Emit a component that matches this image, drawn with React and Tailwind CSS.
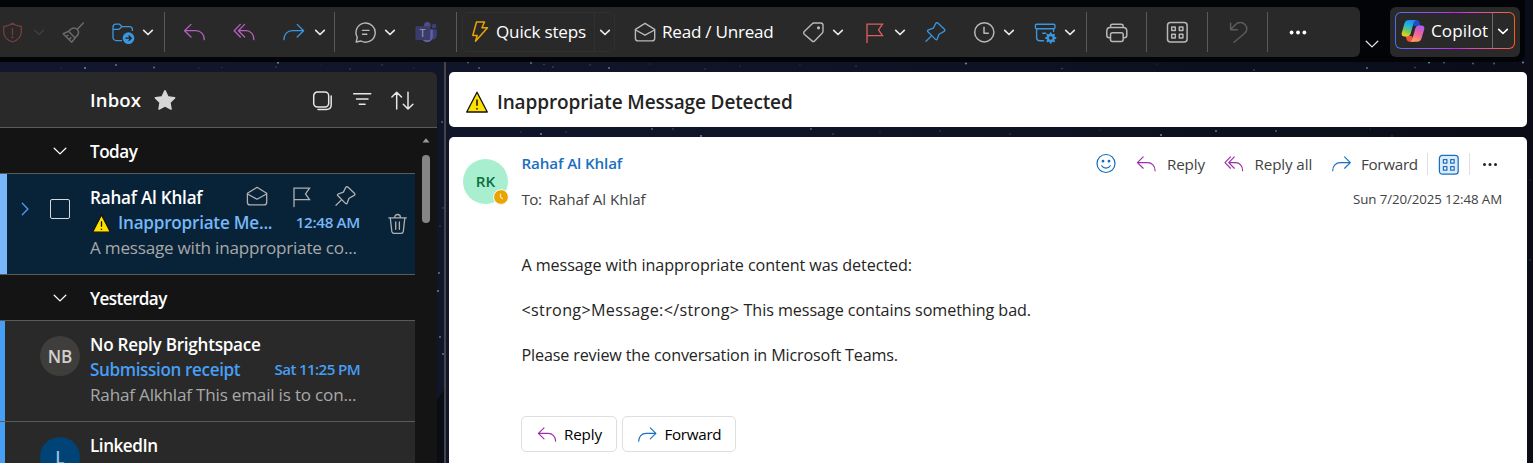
import React from 'react';

const Icon = ({ className = '', children, sw = 1.3, label }) => (
  <svg
    viewBox="0 0 24 24"
    aria-label={label}
    className={`shrink-0 ${className.includes('h-') ? '' : 'h-6 w-6'} ${className}`}
    fill="none"
    stroke="currentColor"
    strokeWidth={sw}
    strokeLinecap="round"
    strokeLinejoin="round"
  >
    {children}
  </svg>
);

const Chevron = ({ className = '' }) => (
  <svg viewBox="0 0 12 12" className={`h-3 w-3 shrink-0 ${className}`} fill="none" stroke="currentColor" strokeWidth="1.7" strokeLinecap="round" strokeLinejoin="round">
    <path d="M1.7 4.3 6 8.5l4.3-4.2" />
  </svg>
);

const ThinChevron = ({ className = '' }) => (
  <svg viewBox="0 0 14 14" className={`h-3.5 w-3.5 shrink-0 ${className}`} fill="none" stroke="currentColor" strokeWidth="1.3" strokeLinecap="round" strokeLinejoin="round">
    <path d="M1.2 4.3 7 9.9l5.8-5.6" />
  </svg>
);

const ReplyIcon = (p) => (
  <Icon {...p}>
    <path d="M8 4.4 1.6 10.7 8 17M2 10.7h10.8c5 0 8.5 3.6 8.5 9" />
  </Icon>
);
const ReplyAllIcon = (p) => (
  <Icon {...p}>
    <path d="M8.3 4.4 2.2 10.7 8.3 17M12.6 4.4l-6.2 6.3 6.2 6.3M7 10.7h7c4.6 0 7.9 3.6 7.9 9" />
  </Icon>
);
const ForwardIcon = (p) => (
  <Icon {...p}>
    <path d="M15.2 4.4 21.6 10.7 15.2 17M21.2 10.7H10.4c-5 0-8.5 3.6-8.5 9" />
  </Icon>
);
const MailIcon = (p) => (
  <Icon {...p}>
    <path d="M2.4 9.3 12 3.3l9.7 6v8.9a2.7 2.7 0 0 1-2.7 2.7H5.1a2.7 2.7 0 0 1-2.7-2.7zM2.6 10 12 15.2 21.5 10" />
  </Icon>
);
const FlagIcon = (p) => (
  <Icon {...p}>
    <path d="M5 22.5V4.2h15.5l-4 5.7 4 5.7H5" strokeLinejoin="miter" />
  </Icon>
);
const PinIcon = (p) => (
  <Icon {...p}>
    <path d="M12.8 3.3q1.100-1 2.300 0l6.300 6q1.100 1.200-.2 2.100L16 14.200l-2 5.200q-.5.900-1.300.2L4.700 11.500q-.7-.8.2-1.300l5.500-2.100zM8.700 15.600 3 21.200" />
  </Icon>
);
const GridIcon = ({ tint = false, ...p }) => (
  <Icon {...p}>
    <rect x="2.500" y="2.500" width="19.600" height="19.600" rx="3" fill={tint ? '#dcebf8' : 'none'} />
    <path d="M6.700 6.900h3.600v3.600H6.700zM14.300 6.900h3.600v3.600h-3.600zM6.700 14.300h3.600v3.600H6.700zM14.300 14.300h3.600v3.600h-3.600z" fill={tint ? '#fff' : 'none'} />
  </Icon>
);
const Dots = ({ className = '', r = 1.9, gap = 6.4 }) => (
  <svg viewBox="0 0 24 24" className={`h-6 w-6 shrink-0 ${className}`} fill="currentColor">
    <circle cx={12 - gap} cy="12.500" r={r} />
    <circle cx="12" cy="12.500" r={r} />
    <circle cx={12 + gap} cy="12.500" r={r} />
  </svg>
);
const Warning = ({ className = '' }) => (
  <svg viewBox="0 0 22 22" className={`shrink-0 ${className}`}>
    <path d="M11 1.200 21.300 21H.7z" fill="#ffe100" stroke="#111" strokeWidth="1.300" strokeLinejoin="round" />
    <path d="M11 8.500v6.300M11 17v1.600" stroke="#111" strokeWidth="1.500" />
  </svg>
);

const Divider = ({ className = '' }) => <div className={`h-10 w-px shrink-0 bg-[#5a5a5a] ${className}`} />;

const CopilotLogo = () => (
  <svg viewBox="0 0 24 24" className="h-6 w-6 shrink-0">
    <defs>
      <linearGradient id="cpA" x1="0.600" y1="0" x2="0.300" y2="1">
        <stop offset="0" stopColor="#1f8cf0" />
        <stop offset="0.350" stopColor="#25b5dc" />
        <stop offset="0.650" stopColor="#6cc665" />
        <stop offset="1" stopColor="#f2d30c" />
      </linearGradient>
      <linearGradient id="cpB" x1="0.700" y1="0" x2="0.300" y2="1">
        <stop offset="0" stopColor="#b35cf0" />
        <stop offset="0.500" stopColor="#f0629a" />
        <stop offset="1" stopColor="#ffa55c" />
      </linearGradient>
    </defs>
    <path d="M11 1h4.500q2.200 0 2.900 2.300L19.300 7H13z" fill="#1b50c4" />
    <path d="M13 22.800H8.500q-2.200 0-2.900-2.300L4.700 17H11z" fill="#f0503c" />
    <path d="M7.800 1h7.500q-2 .5-2.700 3L9.700 14.500Q8.800 17.500 5.800 17.500H3Q-.2 17.300.9 13.300L3.600 4Q4.600 1 7.800 1z" fill="url(#cpA)" />
    <path d="M16.200 22.800H8.700q2-.5 2.700-3L14.300 9.500q.9-3 3.900-3H21q3.200.2 2.100 4.200l-2.700 9.100q-1 3-4.200 3z" fill="url(#cpB)" />
  </svg>
);

const STARS = [
  [61, 67.7, 0.5], [85, 68, 1], [116, 65, 0.9], [154, 67.5, 0.9], [199, 68, 0.5], [222, 67.5, 0.5], [278, 62.7, 1], [276, 67, 0.6], [350, 69, 0.6], [382, 65, 0.6],
  [321, 65, 0.4], [414, 68, 0.5], [468, 62.5, 0.8], [479, 68, 0.8], [531, 63, 0.9], [544, 64.5, 0.6], [553, 67, 0.7], [590, 65, 0.6], [609, 68, 0.9], [650, 64, 0.5], [705, 69, 0.6],
  [740, 66, 0.5], [800, 65, 0.5], [856, 66, 0.6], [966, 63.5, 1], [1062, 68.5, 0.7], [1157, 64, 0.5], [1254, 70, 0.7], [1367, 68, 0.9], [1415, 67.5, 0.7], [1429, 62.5, 1], [1444, 62.5, 0.8],
  [1473, 63.5, 0.8], [1494, 63.5, 0.8], [1523, 62.5, 1], [442, 122, 0.8], [521, 132, 0.6], [541, 134, 1], [566, 132, 0.6], [652, 129, 0.8], [673, 129, 0.7], [701, 136, 1], [811, 129, 0.8],
  [833, 134, 0.7], [880, 132, 0.5], [940, 131, 0.6], [1010, 134, 0.6], [1100, 130, 0.5], [1161, 135, 1], [1216, 131, 0.9], [1276, 131, 0.8], [1370, 129, 0.5], [1392, 136, 0.6],
  [440, 226, 0.6], [439, 273, 0.9], [438, 291, 1], [443, 208, 0.7], [440, 337, 0.9], [443, 354, 0.9], [1530, 180, 0.5], [1530, 260, 0.6],
];

const Toolbar = () => (
  <div className="flex h-[62px] w-[1525px] shrink-0 rounded-br-lg bg-[#020408] pt-[7px]">
    <div className="flex h-[50px] w-[1360px] shrink-0 items-center rounded-r-md bg-[#292929] text-[#b8b8b8]">
      <Icon className="text-[#793c3c]" label="Report">
        <path d="M12.500 3.200C10 5.300 7 6.200 3.700 6.300V12c0 5 3.300 8 8.800 10 5.500-2 8.800-5 8.800-10V6.300c-3.300-.1-6.300-1-8.800-3.100zM12.500 8.500v6" />
        <circle cx="12.500" cy="17.300" r=".5" />
      </Icon>
      <Chevron className="ml-[9px] text-[#3c3c3c]" />
      <Icon className="ml-4 text-[#6a6a6a]" sw={1.5} label="Sweep">
        <path d="m22.300 3-6 6.200M2.200 13.700l5.200-2.300 3-2.600c2-1.300 4-1.100 5.700.5 1.600 1.700 1.800 3.800.5 5.700l-2.500 3-3.400 4.300zM7.600 11.300l6.300 6.500M5.200 16.300l1.700-1M8.500 19.300l1.300-1.600" />
      </Icon>
      <Icon className="ml-[26px] text-[#3a96dd]" label="Move">
        <path d="M10.500 20.600H5.200A3.200 3.200 0 0 1 2 17.400V7.200A3 3 0 0 1 5 4.200h3.600l2.500 2.500h7.400c1.700 0 2.900 1.200 2.900 2.900v1M2 9.300h6l3-2.600" />
        <circle cx="17.500" cy="18.200" r="5.200" fill="#3a96dd" />
        <path d="M15 18.200h5m-2-2.200 2.200 2.200-2.200 2.200" stroke="#202020" />
      </Icon>
      <Chevron className="ml-[7px] text-[#e6e6e6]" />
      <Divider className="ml-[10px]" />
      <ReplyIcon className="ml-[18px] text-[#b55fc0]" />
      <ReplyAllIcon className="ml-[25px] text-[#b55fc0]" />
      <ForwardIcon className="ml-[26px] text-[#3a96dd]" />
      <Chevron className="ml-[8px] text-[#e6e6e6]" />
      <Divider className="ml-[8px]" />
      <Icon className="ml-[18px]" sw={1.4} label="Chat">
        <path d="M3.200 22 4.300 17.400A9.600 9.600 0 1 1 8 21l-4.800 1zM9.500 10.400h6.500M9.500 14.300h4.400" />
      </Icon>
      <Chevron className="ml-[7px] text-[#e6e6e6]" />
      <svg viewBox="0 0 24 24" className="ml-[18px] h-6 w-6 shrink-0">
        <circle cx="20" cy="6.200" r="2.400" fill="#3d3f78" />
        <circle cx="13.300" cy="5.200" r="3.200" fill="#4c4e8c" />
        <path d="M16 9.500h6.800v6a3.800 3.800 0 0 1-5.500 3.500z" fill="#3d3f78" />
        <path d="M7.500 9.500h11.300v7a5.600 5.600 0 0 1-11.300 0z" fill="#5f62a4" />
        <rect x="1.400" y="6.300" width="15" height="13.700" rx="1.500" fill="#3a3c6c" />
        <text x="8.600" y="16.800" textAnchor="middle" fontSize="10" fontWeight="600" fill="#8f8f9c" fontFamily="Open Sans, sans-serif">T</text>
      </svg>
      <Divider className="ml-[18px]" />
      <div className="ml-[5px] flex h-10 w-[153px] shrink-0 items-center rounded-md border border-[#303030]">
        <Icon className="ml-[5px] text-[#eaa300]" sw={1.5} label="Quick">
          <path d="M8.500 2h8L14 7.800h5.500L7.500 21.300 9.200 15.500H4.800z" />
        </Icon>
        <span className="ml-1 w-[98px] text-[17.1px] tracking-[-0.2px] text-white">Quick steps</span>
        <div className="h-full w-px bg-[#303030]" />
        <Chevron className="ml-1 text-[#e6e6e6]" />
      </div>
      <MailIcon className="ml-[18px]" sw={1.4} />
      <span className="ml-[5px] w-[139px] text-[17.1px] tracking-[-0.25px] text-white">Read / Unread</span>
      <Icon sw={1.4} label="Tag">
        <path d="M13 3h6.700C21 3 22 4 22 5.200v6c0 .7-.2 1.200-.7 1.700l-7.700 8c-.8.800-1.800.800-2.600 0l-7.700-6.700c-.8-.8-.8-1.800 0-2.600L11 4q.8-1 2-1z" />
        <circle cx="17.500" cy="7.800" r=".9" fill="currentColor" />
      </Icon>
      <Chevron className="ml-[7px] text-[#e6e6e6]" />
      <FlagIcon className="ml-[18px] text-[#dc5e62]" />
      <Chevron className="ml-2 text-[#e6e6e6]" />
      <PinIcon className="ml-[17px] text-[#3a96dd]" />
      <Icon className="ml-[25px]" sw={1.5} label="Snooze">
        <circle cx="12.300" cy="12.300" r="9.600" />
        <path d="M12 7.200v6h4.300" />
      </Icon>
      <Chevron className="ml-[7px] text-[#e6e6e6]" />
      <Icon className="ml-[18px] text-[#3a96dd]" sw={1.4} label="Archive rules">
        <path d="M3.500 4.300h17.300q1.100 0 1.100 1.200v2q0 1.200-1.100 1.200H3.500q-1.100 0-1.100-1.200v-2q0-1.200 1.100-1.200zM3.600 9v8.500a3.300 3.300 0 0 0 3.300 3.200h3.600M20.600 9v2.500M9.700 13.200h3" />
        <circle cx="17.700" cy="18" r="3" strokeWidth="2.400" />
        <path d="M17.700 13.300v1.200M17.700 21.500v1.200M13 18h1.200M21.200 18h1.200M14.400 14.700l.8.800M20.200 20.500l.8.800M14.400 21.300l.8-.8M20.200 15.500l.8-.8" strokeWidth="2" />
      </Icon>
      <Chevron className="ml-[7px] text-[#e6e6e6]" />
      <Divider className="ml-[10px]" />
      <Icon className="ml-[18px]" sw={1.5} label="Print">
        <path d="M5.500 7.500V6.200q0-2 2-2h8.700q2 0 2 2v1.300M5.500 17.800H4.300q-2.500 0-2.500-2.500v-4.200q0-3.500 3.500-3.500h13q3.500 0 3.500 3.500v4.200q0 2.500-2.500 2.500h-1.100M7.500 12.800h8.700q2 0 2 2v4.600q0 2-2 2H7.500q-2 0-2-2v-4.600q0-2 2-2z" />
      </Icon>
      <Divider className="ml-[17px]" />
      <GridIcon className="ml-[18px]" sw={1.5} />
      <Divider className="ml-[18px]" />
      <Icon className="ml-[18px] text-[#5c5c5c]" sw={1.5} label="Undo">
        <path d="M4.600 3.200v6.500h6.700M4.800 9.300l4.500-4.500c3-2.900 7.300-2.900 9.800-.1 2.500 2.700 2.200 6.300-.6 8.800L8 22.300" />
      </Icon>
      <Divider className="ml-[17px]" />
      <Dots className="ml-[18px] text-white" />
    </div>
    <ThinChevron className="ml-[5px] mt-[30px] text-[#e6e6e6]" />
    <div className="ml-[11px] h-[50px] w-[130px] shrink-0 rounded-md bg-[#292929] p-[5px] pb-2">
      <div className="h-full rounded-md bg-linear-to-r from-[#4a6cf7] via-[#c31ff0] to-[#ff5c0a] p-px">
        <div className="flex h-full items-center rounded-[5px] bg-[#292929] pl-[5px]">
          <CopilotLogo />
          <span className="ml-[6px] w-[61px] pt-px text-[17.1px] tracking-[0.1px] text-white">Copilot</span>
          <div className="h-full w-px bg-[#6a6a6a]" />
          <Chevron className="ml-1 text-white" />
        </div>
      </div>
    </div>
  </div>
);

const GroupHeader = ({ className = '', children }) => (
  <div className="flex h-[45px] pt-[11px] text-white">
    <ThinChevron className="ml-[53px] mt-[5px]" />
    <span className={`ml-[23px] text-[17.1px] leading-[25px] font-semibold ${className}`}>{children}</span>
  </div>
);

const MailRow = ({ bar, avatar, avatarClass, name, nameClass, subject, time, preview }) => (
  <div className="flex h-[101px] w-[415px] border-t border-[#5a5a5a] bg-[#292929]">
    <div className={`w-[5px] shrink-0 ${bar}`} />
    <div className={`ml-[35px] mt-[15px] flex h-10 w-10 shrink-0 items-center justify-center rounded-full pt-px text-[17.1px] font-semibold ${avatarClass}`}>{avatar}</div>
    <div className="ml-[9px] w-[271px] pt-[11px] leading-[25px] text-[17.1px] whitespace-nowrap">
      <div className={`pl-px font-semibold text-white ${nameClass}`}>{name}</div>
      <div className="flex justify-between pl-px font-semibold text-[#479ef5]">
        <span className="tracking-[-0.37px]">{subject}</span>
        <span className="text-[15.2px] tracking-[-0.65px]">{time}</span>
      </div>
      <div className="pl-px tracking-[-0.2px] text-[#a8a8a8]">{preview}</div>
    </div>
  </div>
);

const SelectedRow = () => (
  <div className="flex h-[102px] w-[415px] border-y border-[#5a5a5a] bg-[#082338]">
    <div className="w-[7px] shrink-0 bg-[#77b7f7]" />
    <ThinChevron className="ml-[11px] mt-[28px] -rotate-90 text-[#479ef5]" />
    <div className="ml-[18px] mt-[25px] h-5 w-5 shrink-0 rounded-xs border border-[#d8d8d8]" />
    <div className="ml-5 w-[270px] shrink-0 pt-[11px] leading-[25px] text-[17.1px] whitespace-nowrap">
      <div className="flex h-[25px] justify-between pr-[3px]">
        <span className="font-semibold tracking-[-0.22px] text-white">Rahaf Al Khlaf</span>
        <div className="flex gap-5 text-[#b0b0b0]">
          <MailIcon sw={1.3} className="-mt-px" />
          <FlagIcon sw={1.3} className="-mt-px" />
          <PinIcon sw={1.3} className="-mt-px" />
        </div>
      </div>
      <div className="flex h-[25px] font-semibold text-[#77b7f7]">
        <Warning className="mt-[4px] ml-[2px] h-[19px] w-[19px]" />
        <span className="ml-[7px] tracking-[-0.22px]">Inappropriate Me...</span>
        <span className="ml-auto text-[15.2px] tracking-[-0.33px]">12:48 AM</span>
      </div>
      <div className="tracking-[-0.22px] text-[#a8a8a8]">A message with inappropriate co...</div>
    </div>
    <Icon className="ml-[26px] mt-[38px] text-[#b0b0b0]" label="Delete">
      <path d="M2.800 5.800h17.500M8.700 5.500c0-4 5.700-4 5.700 0M4.300 6l1.500 13.400q.3 2 2.200 2h7.100q1.900 0 2.200-2L18.800 6M9.700 10v7.300M13.400 10v7.300" />
    </Icon>
  </div>
);

const MessageList = () => (
  <div className="mt-[10px] flex h-[391px] w-[437px] shrink-0 flex-col overflow-hidden rounded-tr-md bg-[#141414]">
    <div className="flex h-14 shrink-0 items-center border-b border-[#5a5a5a] bg-[#292929] text-[#e6e6e6]">
      <span className="ml-[90px] w-[51px] text-[18.5px] font-semibold tracking-[0.15px] text-white">Inbox</span>
      <svg viewBox="0 0 24 24" className="ml-[12px] h-6 w-6 shrink-0" fill="#d6d6d6">
        <path d="M12 2q.6 0 .9.700l2.600 5.600 6.100.8q1.500.3.500 1.400l-4.400 4.200 1.100 6.200q.1 1.300-1.100.8L12 18.700l-5.600 3q-1.300.5-1.100-.8l1-6.200L1.900 10.500q-1-1.100.5-1.400l6.100-.8 2.600-5.600Q11.400 2 12 2z" />
      </svg>
      <Icon className="ml-[133px]" sw={1.5} label="Select">
        <rect x="3.700" y="4" width="15" height="15" rx="3.800" />
        <path d="M8 21.500h8.500q4.700 0 4.700-4.700V8" />
      </Icon>
      <Icon className="ml-4" sw={1.5} label="Filter">
        <path d="M3.700 5.700h17M6.500 11h11.500M9.300 16.200h5.800" />
      </Icon>
      <Icon className="ml-4" sw={1.5} label="Sort">
        <path d="M6.700 21V4.500M1.900 9l4.800-4.800L11.500 9M18 4.300v16.500M13.300 16.300l4.700 4.700 4.900-4.700" />
      </Icon>
    </div>
    <div className="flex min-h-0 flex-1">
      <div className="w-[415px] shrink-0">
        <GroupHeader className="tracking-[-0.5px]">Today</GroupHeader>
        <SelectedRow />
        <GroupHeader className="tracking-[-0.58px]">Yesterday</GroupHeader>
        <MailRow bar="bg-[#479ef5]" avatar="NB" avatarClass="bg-[#3f3e3d] text-[#d2d0ce]" name="No Reply Brightspace" nameClass="tracking-[-0.26px]" subject="Submission receipt" time="Sat 11:25 PM" preview="Rahaf Alkhlaf This email is to con..." />
        <MailRow bar="bg-[#479ef5]" avatar="L" avatarClass="bg-[#004377] text-[#9abfdc]" name="LinkedIn" nameClass="tracking-[-0.46px]" />
      </div>
      <div className="ml-[7px] flex w-2 flex-col items-center pt-[10px]">
        <svg viewBox="0 0 8 5" className="h-[5px] w-2" fill="#9a9a9a"><path d="M4 .3 7.500 4.500H.5z" /></svg>
        <div className="mt-[12px] h-[68px] w-2 rounded-full bg-[#858585]" />
      </div>
    </div>
  </div>
);

const ReadingPane = () => (
  <div className="ml-[3px] flex w-[1078px] shrink-0 flex-col gap-[10px] pt-[10px]">
    <div className="flex h-[55px] shrink-0 items-center rounded-[5px] bg-white pt-[5px] pl-[17px]">
      <Warning className="h-[22px] w-[22px]" />
      <span className="ml-[9px] text-[19px] font-semibold tracking-[-0.13px] text-[#242424]">Inappropriate Message Detected</span>
    </div>
    <div className="h-[326px] rounded-t-[5px] bg-white pl-[14px] text-[15.2px] text-[#424242]">
      <div className="flex">
        <div className="relative mt-[22px] flex h-[45px] w-[45px] items-center justify-center rounded-full bg-[#a7efcf] text-[15.2px] font-semibold text-[#0b703c]">
          RK
          <svg viewBox="0 0 16 16" className="absolute top-[30px] left-[30px] h-4 w-4">
            <circle cx="8" cy="8" r="7.400" fill="#eaa300" stroke="#fff" strokeWidth="1" />
            <path d="M7.500 4.700v3.600l2.200 1.700" fill="none" stroke="#fde9b5" strokeWidth="1.200" />
          </svg>
        </div>
        <div className="ml-[13.5px] flex flex-1 flex-col pr-[25px]">
          <div className="mt-[9px] flex h-[36px] items-center">
            <span className="pb-[2px] font-semibold tracking-[-0.13px] text-[#1a6fc0]">Rahaf Al Khlaf</span>
            <div className="ml-auto flex items-center">
              <Icon className="text-[#0f6cbd]" sw={1.2} label="React">
                <circle cx="12" cy="11.500" r="9" />
                <path d="M7.700 13.800c1.900 3 6.700 3 8.600 0" />
                <circle cx="9" cy="9.200" r=".8" fill="currentColor" />
                <circle cx="15" cy="9.200" r=".8" fill="currentColor" />
              </Icon>
              <ReplyIcon className="ml-[18px] h-[21.5px] w-[21.5px] text-[#9b2fa8]" />
              <span className="ml-[10px] w-[56px] tracking-[-0.15px]">Reply</span>
              <ReplyAllIcon className="h-[21.5px] w-[21.5px] text-[#9b2fa8]" />
              <span className="ml-[10px] w-[76px] tracking-[-0.12px]">Reply all</span>
              <ForwardIcon className="h-[21.5px] w-[21.5px] text-[#1a6fc0]" />
              <span className="ml-[9px] w-[66px] tracking-[-0.3px]">Forward</span>
              <div className="h-[22px] w-px bg-[#e0e0e0]" />
              <GridIcon tint className="ml-[9px] h-[23px] w-[23px] text-[#1a6fc0]" />
              <div className="ml-[9px] h-[22px] w-px bg-[#e0e0e0]" />
              <Dots className="ml-[8px] text-[#242424]" r={1.5} gap={5.5} />
            </div>
          </div>
          <div className="mt-[5px] flex h-6 items-center">
            <span className="w-[27px] tracking-[-0.5px]">To:</span>
            <span className="tracking-[-0.06px]">Rahaf Al Khlaf</span>
            <span className="ml-auto pt-px text-[13.3px] tracking-[-0.1px]">Sun 7/20/2025 12:48 AM</span>
          </div>
        </div>
      </div>
      <div className="ml-[58.5px] mt-[43px] text-[16.15px] leading-[22px] text-[#242424]">
        <p className="tracking-[-0.08px]">A message with inappropriate content was detected:</p>
        <p className="mt-[23px] tracking-[-0.07px]">
          <span className="tracking-[0.33px]">{'<strong>Message:</strong>'}</span>
          {' This message contains something bad.'}
        </p>
        <p className="mt-[23px] tracking-[-0.15px]">Please review the conversation in Microsoft Teams.</p>
      </div>
      <div className="ml-[58px] mt-[50px] flex gap-[5px] text-black">
        <button className="flex h-9 w-24 items-center rounded-[5px] border border-[#dedede] pl-[14.5px]">
          <ReplyIcon className="h-[21px] w-[21px] text-[#9b2fa8]" />
          <span className="ml-[6.5px] tracking-[-0.15px]">Reply</span>
        </button>
        <button className="flex h-9 w-[114px] items-center rounded-[5px] border border-[#dedede] pl-[13.5px]">
          <ForwardIcon className="h-[21px] w-[21px] text-[#1a6fc0]" />
          <span className="ml-[7px] tracking-[-0.3px]">Forward</span>
        </button>
      </div>
    </div>
  </div>
);

export default function App() {
  return (
    <div className="relative flex h-[463px] w-[1533px] flex-col overflow-hidden bg-linear-to-r from-[#12172d] via-[#101427] to-[#0a0d18] font-['Open_Sans',sans-serif]">
      <svg viewBox="0 0 1533 463" className="absolute inset-0 h-full w-full" fill="#6d8fa5">
        <path d="M437 400l8-12v75h-8zM1527 400l6-14v77h-6z" fill="#0a0c16" />
        {STARS.map(([x, y, o], i) => (
          <circle key={i} cx={x} cy={y} r={o * 1.1} opacity={o * 0.9} />
        ))}
      </svg>
      <div className="relative flex flex-col">
        <Toolbar />
        <div className="flex h-[401px]">
          <MessageList />
          <div className="ml-[7px] w-0.5 shrink-0 bg-[#454545]" />
          <ReadingPane />
        </div>
      </div>
    </div>
  );
}
